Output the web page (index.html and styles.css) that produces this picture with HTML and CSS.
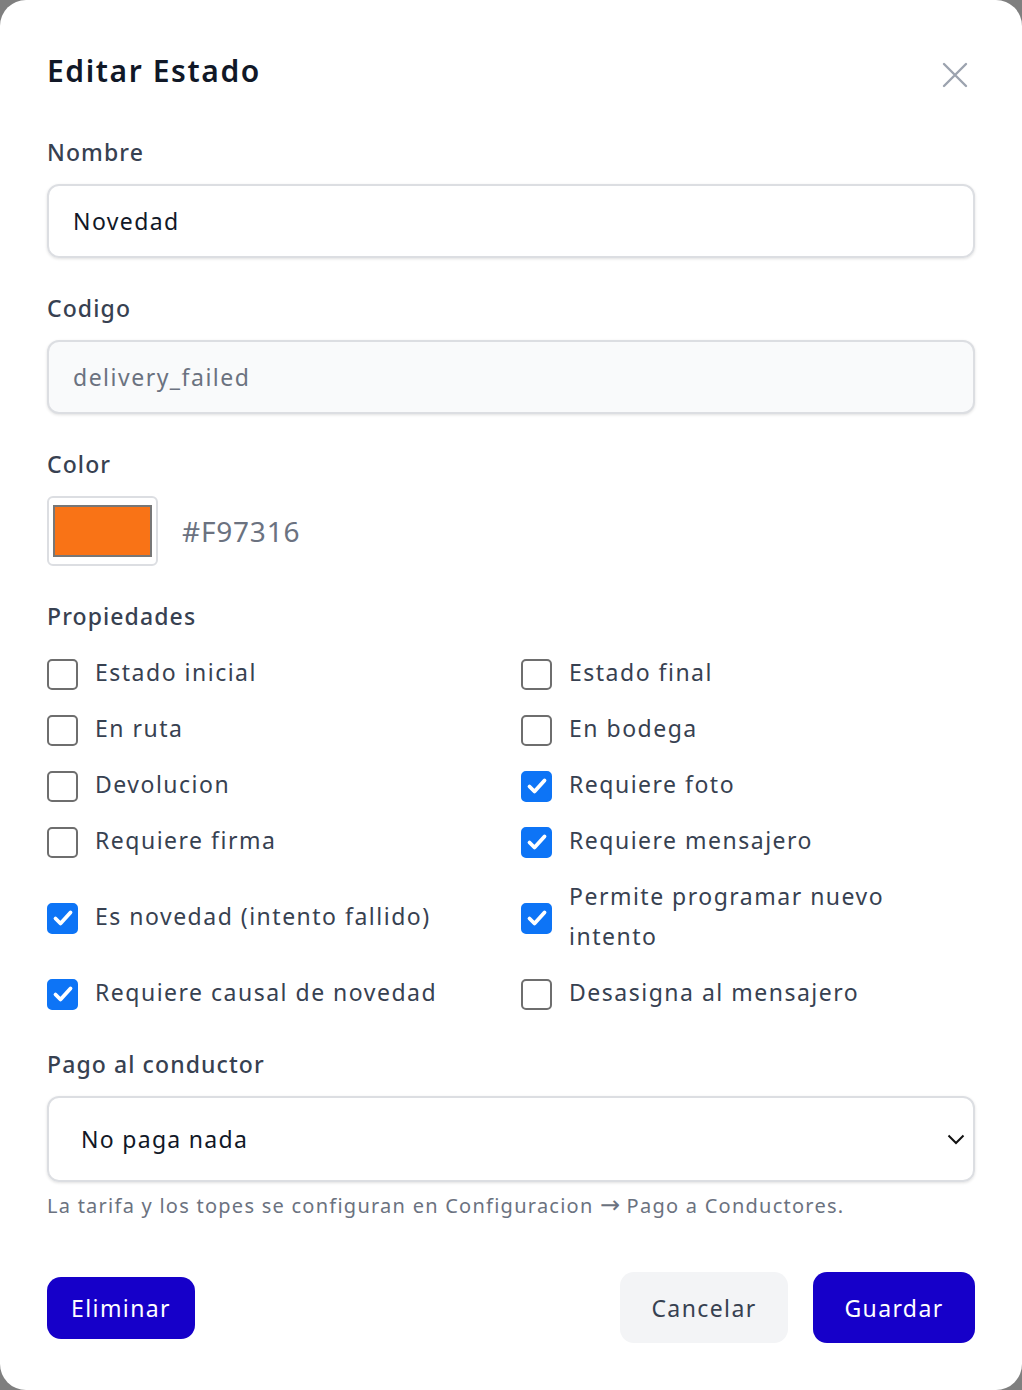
FILE: index.html
```html
<!DOCTYPE html>
<html lang="es">
<head>
<meta charset="utf-8">
<title>Editar Estado</title>
<link rel="stylesheet" href="styles.css">
</head>
<body>
<div class="modal">
  <div class="header">
    <h1 class="title">Editar Estado</h1>
    <button class="close" aria-label="Cerrar">
      <svg width="26" height="26" viewBox="0 0 26 26"><path d="M2 2L24 24M24 2L2 24" stroke="#9ca3af" stroke-width="2.4" stroke-linecap="round"/></svg>
    </button>
  </div>

  <div class="field">
    <label class="label">Nombre</label>
    <div class="input">Novedad</div>
  </div>

  <div class="field">
    <label class="label">Codigo</label>
    <div class="input disabled">delivery_failed</div>
  </div>

  <div class="field">
    <label class="label">Color</label>
    <div class="color-row">
      <div class="swatch"><div class="swatch-inner"></div></div>
      <span class="hex">#F97316</span>
    </div>
  </div>

  <div class="field">
    <div class="label">Propiedades</div>
    <div class="props">
      <div class="prop"><span class="cb"></span><span class="prop-text">Estado inicial</span></div>
      <div class="prop"><span class="cb"></span><span class="prop-text">Estado final</span></div>
      <div class="prop"><span class="cb"></span><span class="prop-text">En ruta</span></div>
      <div class="prop"><span class="cb"></span><span class="prop-text">En bodega</span></div>
      <div class="prop"><span class="cb"></span><span class="prop-text">Devolucion</span></div>
      <div class="prop"><span class="cb checked"><svg viewBox="0 0 24 24" width="24" height="24"><path d="M4.5 12.5l5 5 10-11" fill="none" stroke="#fff" stroke-width="3.8" stroke-linecap="round" stroke-linejoin="round"/></svg></span><span class="prop-text">Requiere foto</span></div>
      <div class="prop"><span class="cb"></span><span class="prop-text">Requiere firma</span></div>
      <div class="prop"><span class="cb checked"><svg viewBox="0 0 24 24" width="24" height="24"><path d="M4.5 12.5l5 5 10-11" fill="none" stroke="#fff" stroke-width="3.8" stroke-linecap="round" stroke-linejoin="round"/></svg></span><span class="prop-text">Requiere mensajero</span></div>
      <div class="prop"><span class="cb checked"><svg viewBox="0 0 24 24" width="24" height="24"><path d="M4.5 12.5l5 5 10-11" fill="none" stroke="#fff" stroke-width="3.8" stroke-linecap="round" stroke-linejoin="round"/></svg></span><span class="prop-text">Es novedad (intento fallido)</span></div>
      <div class="prop"><span class="cb checked"><svg viewBox="0 0 24 24" width="24" height="24"><path d="M4.5 12.5l5 5 10-11" fill="none" stroke="#fff" stroke-width="3.8" stroke-linecap="round" stroke-linejoin="round"/></svg></span><span class="prop-text">Permite programar nuevo intento</span></div>
      <div class="prop"><span class="cb checked"><svg viewBox="0 0 24 24" width="24" height="24"><path d="M4.5 12.5l5 5 10-11" fill="none" stroke="#fff" stroke-width="3.8" stroke-linecap="round" stroke-linejoin="round"/></svg></span><span class="prop-text">Requiere causal de novedad</span></div>
      <div class="prop"><span class="cb"></span><span class="prop-text">Desasigna al mensajero</span></div>
    </div>
  </div>

  <div class="field field-pay">
    <label class="label">Pago al conductor</label>
    <div class="select">
      <span>No paga nada</span>
      <svg width="18" height="12" viewBox="0 0 18 12"><path d="M1.5 2.5L9 10L16.5 2.5" fill="none" stroke="#111" stroke-width="2"/></svg>
    </div>
    <p class="help">La tarifa y los topes se configuran en Configuracion <span class="arrow">→</span> Pago a Conductores.</p>
  </div>

  <div class="footer">
    <button class="btn btn-primary btn-small">Eliminar</button>
    <div class="footer-right">
      <button class="btn btn-light">Cancelar</button>
      <button class="btn btn-primary btn-save">Guardar</button>
    </div>
  </div>
</div>
</body>
</html>
```

FILE: styles.css
```css
* { box-sizing: border-box; }
html, body { margin: 0; padding: 0; }
body {
  background: #7f7f7f;
  font-family: "Noto Sans", "Open Sans", sans-serif;
  color: #374151;
}
.modal {
  background: #fff;
  border-radius: 26px;
  height: 1390px;
  padding: 51px 47px 0 47px;
}
.header {
  display: flex;
  justify-content: space-between;
  align-items: center;
  height: 40px;
}
.title {
  margin: 0;
  font-size: 30px;
  font-weight: 600;
  color: #111827;
  line-height: 40px;
  letter-spacing: 1.6px;
}
.close {
  border: 0;
  background: none;
  padding: 0;
  margin: 8px 7px 0 0;
  width: 26px;
  height: 26px;
  display: flex;
}
.field { margin-top: 34px; }
.header + .field { margin-top: 45px; }
.field-pay { margin-top: 36px; }
.label {
  display: block;
  font-size: 23px;
  line-height: 32px;
  color: #374151;
  font-weight: 500;
  letter-spacing: 1.1px;
}
.input {
  margin-top: 16px;
  height: 74px;
  border: 2px solid #dcdee2;
  border-radius: 12px;
  box-shadow: 0 1px 3px rgba(0,0,0,0.12);
  display: flex;
  align-items: center;
  padding-left: 24px;
  font-size: 23px;
  color: #111827;
  letter-spacing: 1.4px;
}
.input.disabled {
  background: #f9fafb;
  color: #6b7280;
  letter-spacing: 1.5px;
}
.color-row {
  margin-top: 16px;
  display: flex;
  align-items: center;
  gap: 24px;
}
.swatch {
  width: 111px;
  height: 70px;
  border: 2px solid #dcdee2;
  border-radius: 6px;
  padding: 7px 4px;
}
.swatch-inner {
  width: 100%;
  height: 100%;
  background: #f97316;
  border: 2px solid #777;
}
.hex {
  font-size: 28px;
  color: #6b7280;
  letter-spacing: 0.8px;
}
.props {
  margin-top: 20px;
  display: grid;
  grid-template-columns: 1fr 1fr;
  column-gap: 20px;
  row-gap: 16px;
}
.prop {
  display: flex;
  align-items: center;
  gap: 17px;
}
.cb {
  flex: none;
  width: 31px;
  height: 31px;
  border: 2px solid #6e6e6e;
  border-radius: 5px;
  display: flex;
  align-items: center;
  justify-content: center;
  margin-top: 4px;
}
.cb.checked {
  background: #0d74f6;
  border-color: #0d74f6;
}
.prop-text {
  font-size: 23px;
  line-height: 40px;
  letter-spacing: 1.5px;
  color: #374151;
}
.select {
  margin-top: 16px;
  height: 86px;
  border: 2px solid #dcdee2;
  border-radius: 12px;
  box-shadow: 0 1px 3px rgba(0,0,0,0.12);
  display: flex;
  align-items: center;
  justify-content: space-between;
  padding: 0 8px 0 32px;
  font-size: 23px;
  color: #111827;
  letter-spacing: 1.3px;
}
.help {
  margin: 10px 0 0 0;
  font-size: 20px;
  line-height: 28px;
  color: #6b7280;
  letter-spacing: 1.25px;
}
.arrow {
  font-family: "DejaVu Sans", sans-serif;
  font-size: 24px;
  line-height: 20px;
  letter-spacing: 0;
}
.footer {
  margin-top: 52px;
  display: flex;
  justify-content: space-between;
  align-items: center;
}
.footer-right {
  display: flex;
  gap: 25px;
}
.btn {
  font-family: inherit;
  font-size: 23px;
  letter-spacing: 1.4px;
  border: 0;
  border-radius: 14px;
  height: 71px;
  padding: 0;
}
.btn-small {
  height: 62px;
  width: 148px;
}
.btn-primary {
  background: #1600c9;
  color: #fff;
}
.btn-light {
  background: #f3f4f6;
  color: #374151;
  width: 168px;
}
.btn-save { width: 162px; }
```
